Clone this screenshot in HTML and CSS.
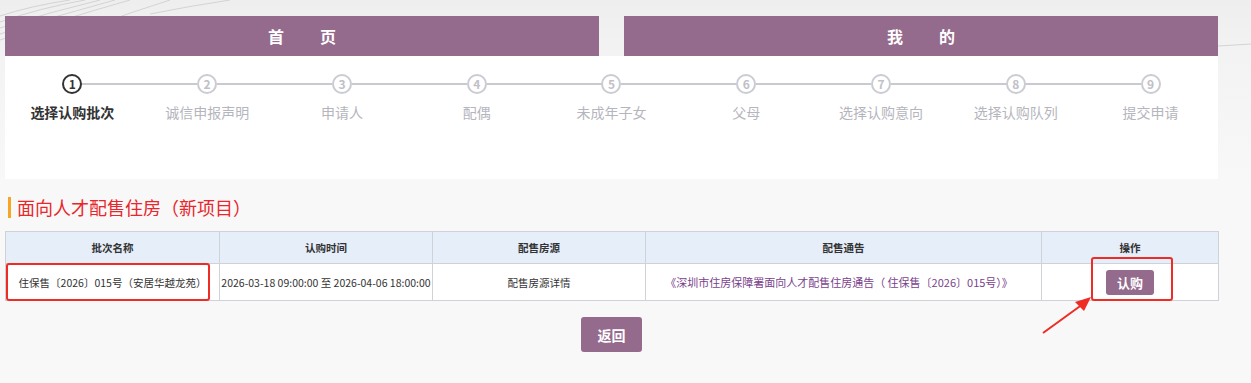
FILE: index.html
```html
<!DOCTYPE html>
<html lang="zh-CN">
<head>
<meta charset="utf-8">
<title>面向人才配售住房</title>
<link rel="stylesheet" href="styles.css">
</head>
<body>
<div class="page">
  <svg class="deco" width="1251" height="60" viewBox="0 0 1251 60" aria-hidden="true">
    <g fill="none" stroke="#d3d3d3" stroke-width="1">
      <path d="M0 40 Q60 20 130 0"/>
      <path d="M0 34 Q55 16 115 0"/>
      <path d="M0 28 Q50 12 100 0"/>
      <path d="M0 22 Q40 8 85 0"/>
      <path d="M0 16 Q30 6 70 0"/>
      <path d="M10 60 Q90 25 170 0"/>
      <path d="M150 14 Q190 6 230 0"/>
      <path d="M1218 46 L1251 44"/>
    </g>
  </svg>
  <div class="wrap">
    <nav class="nav">
      <a class="nav-item"><span>首</span><span>页</span></a>
      <a class="nav-item"><span>我</span><span>的</span></a>
    </nav>
    <section class="steps">
      <div class="step active"><span class="dot">1</span><span class="label">选择认购批次</span></div>
      <div class="step"><span class="dot">2</span><span class="label">诚信申报声明</span></div>
      <div class="step"><span class="dot">3</span><span class="label">申请人</span></div>
      <div class="step"><span class="dot">4</span><span class="label">配偶</span></div>
      <div class="step"><span class="dot">5</span><span class="label">未成年子女</span></div>
      <div class="step"><span class="dot">6</span><span class="label">父母</span></div>
      <div class="step"><span class="dot">7</span><span class="label">选择认购意向</span></div>
      <div class="step"><span class="dot">8</span><span class="label">选择认购队列</span></div>
      <div class="step"><span class="dot">9</span><span class="label">提交申请</span></div>
    </section>
    <h2 class="title">面向人才配售住房（新项目）</h2>
    <div class="table-wrap">
      <table class="batch">
        <colgroup>
          <col class="c1"><col class="c2"><col class="c3"><col class="c4"><col class="c5">
        </colgroup>
        <thead>
          <tr><th>批次名称</th><th>认购时间</th><th>配售房源</th><th>配售通告</th><th>操作</th></tr>
        </thead>
        <tbody>
          <tr>
            <td>住保售〔2026〕015号（安居华越龙苑）</td>
            <td class="time">2026-03-18 09:00:00 至 2026-04-06 18:00:00</td>
            <td>配售房源详情</td>
            <td class="notice-cell"><a class="notice">《深圳市住房保障署面向人才配售住房通告（ 住保售〔2026〕015号）》</a></td>
            <td><button class="btn-buy">认购</button></td>
          </tr>
        </tbody>
      </table>
      <div class="mark mark-name"></div>
      <div class="mark mark-btn"></div>
      <svg class="arrow" width="60" height="45" viewBox="0 0 60 45" aria-hidden="true">
        <path d="M4 41 L44 12" stroke="#ee2b24" stroke-width="2" fill="none"/>
        <path d="M52 5 L36 10 L45 19 Z" fill="#ee2b24"/>
      </svg>
    </div>
    <div class="actions"><button class="btn-back">返回</button></div>
  </div>
</div>
</body>
</html>
```
FILE: styles.css
```css
* { box-sizing: border-box; }
html, body { margin: 0; padding: 0; }
body {
  background: #f8f8f8;
  font-family: "Noto Sans CJK SC", "Noto Sans", sans-serif;
  color: #333;
  width: 1251px;
  height: 383px;
  overflow: hidden;
}
.page {
  position: relative;
  background: linear-gradient(#eeeeee 0, #f3f3f3 56px, #f8f8f8 180px);
  min-height: 383px;
}
.deco { position: absolute; left: 0; top: 0; }
.wrap {
  position: relative;
  width: 1213px;
  margin-left: 5px;
  padding-top: 16px;
}
.nav {
  display: flex;
  gap: 25px;
}
.nav-item {
  flex: 1;
  height: 40px;
  background: #946a8d;
  color: #fff;
  display: flex;
  align-items: center;
  justify-content: center;
  gap: 36px;
  font-size: 16px;
  font-weight: 700;
}
.steps {
  background: #fff;
  height: 123px;
  display: grid;
  grid-template-columns: repeat(9, 1fr);
  padding-top: 18px;
}
.step {
  position: relative;
  display: flex;
  flex-direction: column;
  align-items: center;
}
.step::before, .step::after {
  content: "";
  position: absolute;
  top: 9px;
  height: 2px;
  background: #c9c9d2;
}
.step::before { left: 0; right: calc(50% + 10px); }
.step::after { left: calc(50% + 10px); right: 0; }
.step:first-child::before, .step:last-child::after { display: none; }
.dot {
  width: 20px;
  height: 20px;
  border: 2px solid #cbcbd3;
  border-radius: 50%;
  display: flex;
  align-items: center;
  justify-content: center;
  font-size: 12px;
  font-weight: 700;
  color: #c0c0c8;
  line-height: 1;
}
.label {
  margin-top: 8px;
  font-size: 14px;
  line-height: 20px;
  color: #b5b5bd;
}
.step.active .dot { border-color: #333; color: #333; }
.step.active .label { color: #333; font-weight: 700; }
.title {
  margin: 18px 0 0 3px;
  padding-left: 6px;
  border-left: 3px solid #f5a623;
  font-size: 18px;
  line-height: 21px;
  font-weight: 400;
  color: #e8262b;
}
.table-wrap {
  position: relative;
  margin-top: 13px;
}
.batch {
  width: 1213px;
  border-collapse: collapse;
  table-layout: fixed;
  font-size: 10.5px;
  background: #fff;
}
.c1 { width: 214px; }
.c2 { width: 213px; }
.c3 { width: 213px; }
.c4 { width: 396px; }
.c5 { width: 177px; }
.batch th, .batch td {
  border: 1px solid #cfd3d8;
  text-align: center;
  padding: 0;
  white-space: nowrap;
}
.batch th {
  height: 32px;
  background: #e6eefa;
  font-weight: 700;
  color: #333;
}
.batch td {
  height: 37px;
  color: #333;
}
.batch td.time { overflow: visible; }
.batch td.notice-cell { padding-right: 9px; font-size: 11px; }
.notice { color: #7a3f8c; }
.btn-buy {
  width: 48px;
  height: 25px;
  border: 0;
  border-radius: 3px;
  background: #946a8d;
  color: #fff;
  font-family: inherit;
  font-size: 13px;
  font-weight: 700;
  padding: 0;
}
.mark {
  position: absolute;
  border: 2px solid #ee2b24;
  border-radius: 3px;
}
.mark-name { left: 1px; top: 32px; width: 204px; height: 38px; }
.mark-btn { left: 1086px; top: 26px; width: 82px; height: 44px; }
.arrow { position: absolute; left: 1034px; top: 61px; }
.actions {
  display: flex;
  justify-content: center;
  padding-top: 16px;
}
.btn-back {
  width: 61px;
  height: 35px;
  border: 0;
  border-radius: 3px;
  background: #946a8d;
  color: #fff;
  font-family: inherit;
  font-size: 14px;
  font-weight: 700;
}
```
